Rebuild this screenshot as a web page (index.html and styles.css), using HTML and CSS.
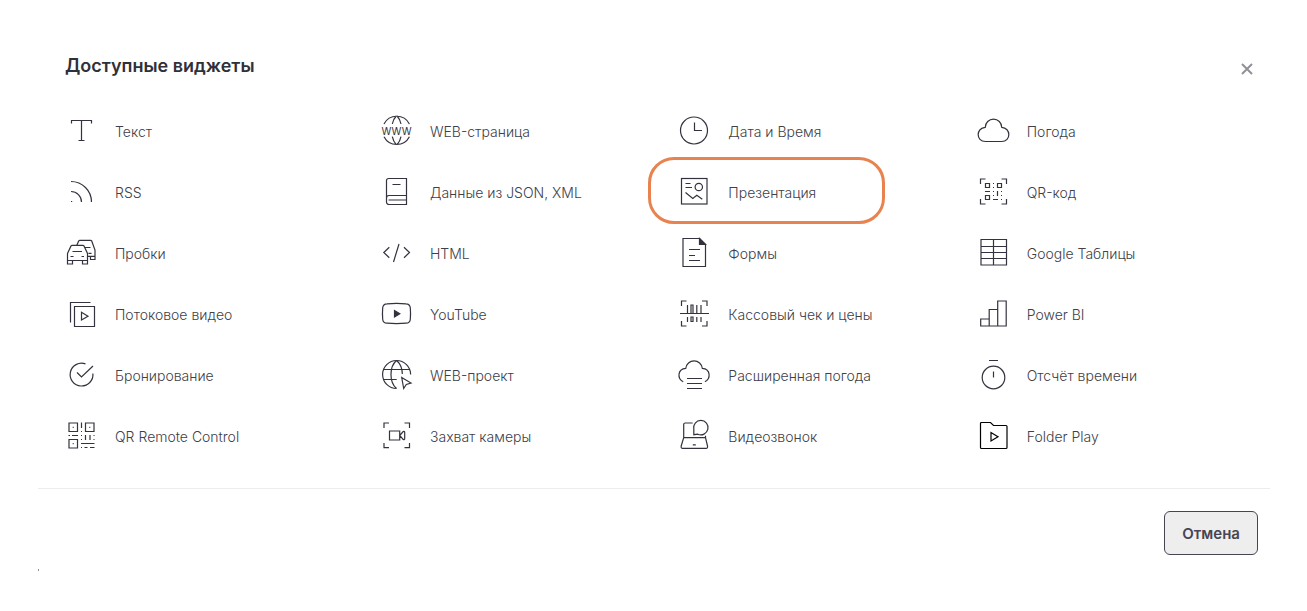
FILE: index.html
```
<!DOCTYPE html>
<html lang="ru">
<head>
<meta charset="UTF-8">
<meta name="viewport" content="width=device-width, initial-scale=1.0">
<title>Доступные виджеты</title>
<link rel="stylesheet" href="styles.css">
</head>
<body>
<div class="modal">
    <div class="modal-header">
        <h1>Доступные виджеты</h1>
        <button class="close" type="button" aria-label="Закрыть">
            <svg viewBox="0 0 12 12"><path d="M1 1l10 10M11 1L1 11"/></svg>
        </button>
    </div>

    <div class="widgets">
        <!-- Row 1 -->
        <button class="widget" type="button">
            <svg viewBox="0 0 32 32"><path d="M6.5 8.5v-3h20v3M16.5 5.5v20M13.5 25.5h6"/></svg>
            <span>Текст</span>
        </button>
        <button class="widget" type="button">
            <svg viewBox="0 0 32 32"><path d="M4 9a14.3 14.3 0 0 1 25.4 0M12.3 9q1-5 4-8M21 9q-1-5-4-8M4 21.7a14.3 14.3 0 0 0 25.4 0M12.3 21.7q1 5 4 8M21 21.7q-1 5-4 8"/><text x="16.500" y="19.500" text-anchor="middle">WWW</text></svg>
            <span>WEB-страница</span>
        </button>
        <button class="widget" type="button">
            <svg viewBox="0 0 32 32"><circle cx="16" cy="15.5" r="13.5"/><path d="M16.500 7.500v8h7.500"/></svg>
            <span>Дата и Время</span>
        </button>
        <button class="widget" type="button">
            <svg viewBox="0 0 32 32"><path d="M8.5 26.500c-10 0-9.500-13.700-.2-14.200a8.200 8.200 0 0 1 16.400 0c9.300.5 9.800 14.200-.2 14.200z"/></svg>
            <span>Погода</span>
        </button>

        <!-- Row 2 -->
        <button class="widget" type="button">
            <svg viewBox="0 0 32 32"><path d="M6 5.5a20.500 20.500 0 0 1 20.500 20.500M6 15.500a10.500 10.500 0 0 1 10.500 10.500M6 25.500h1.200"/></svg>
            <span>RSS</span>
        </button>
        <button class="widget" type="button">
            <svg viewBox="0 0 32 32"><path d="M26.500 19.500v-17h-18a2 2 0 0 0-2 2v21.500a2.500 2.500 0 0 0 2.500 2.500h17.500v-4.500h-18M26.500 24v-4.500h-17.500a2.500 2.500 0 0 0-2.500 2.500M12.500 8.500h8"/></svg>
            <span>Данные из JSON, XML</span>
        </button>
        <button class="widget selected" type="button">
            <svg viewBox="0 0 32 32"><rect x="3.5" y="2.5" width="25.5" height="25.5"/><circle cx="20.8" cy="11" r="3.7"/><path d="M7.500 7.500h5M7.500 11.500h6.500M7.500 16.500l7.300 6 4-3.200 5.500 4"/></svg>
            <span>Презентация</span>
        </button>
        <button class="widget" type="button">
            <svg viewBox="0 0 32 32"><path d="M3.500 8v-5h5M24.500 3h5v5M3.500 23v5h5M24.500 28h5v-5"/><path d="M8.500 7.500h4v4h-4zM20.500 7.500h4v4h-4zM8.500 19.500h4v4h-4zM8 15.500h5M16 7.500h1M16 11.500h1M16 15.500h1M16 19.500h1M20.500 15v5M24 15.500h1M24 19.500h1M16 23.500h5M24 23.500h1"/></svg>
            <span>QR-код</span>
        </button>

        <!-- Row 3 -->
        <button class="widget" type="button">
            <svg viewBox="0 0 32 32"><path d="M2.500 16.500l3.500-7.500 1-.7h11l1 .7 3.500 7.500v7h-20zM2.500 23.500v3.500h5v-3.500M17.500 23.500v3.500h5v-3.500M7.500 14.500h9.500M5.500 19.500h3M16.500 19.500h2.500M11.700 8.500l2-4.500 1-.7h11l1 .7 3.300 9v9.500h-4.500v-3.200M30 19.300h-7.500M20 10.500h5.500M23.500 16.300h3"/></svg>
            <span>Пробки</span>
        </button>
        <button class="widget" type="button">
            <svg viewBox="0 0 32 32"><path d="M9.300 10.300l-5.500 5.200 5.500 5.200M24 10.300l5.500 5.200-5.500 5.200M19 7l-5.500 18"/></svg>
            <span>HTML</span>
        </button>
        <button class="widget" type="button">
            <svg viewBox="0 0 32 32"><path d="M5 1.500h16.500l6 6v22h-22.500zM11 12.500h11M11 18.500h6M11 23.500h11"/><path class="solid" d="M21.500 1.500v6h6z"/></svg>
            <span>Формы</span>
        </button>
        <button class="widget" type="button">
            <svg viewBox="0 0 32 32"><path d="M4 2.500h25.500v25.500h-25.500zM4 9.500h25.500M4 15.500h25.500M4 21.500h25.500M16.500 2.500v25.500"/></svg>
            <span>Google Таблицы</span>
        </button>

        <!-- Row 4 -->
        <button class="widget" type="button">
            <svg viewBox="0 0 32 32"><path d="M25.500 4.500h-20v20M9.500 8.500h20v20h-20zM16.500 14.300v7.700l6.500-3.800z"/></svg>
            <span>Потоковое видео</span>
        </button>
        <button class="widget" type="button">
            <svg viewBox="0 0 32 32"><path d="M7 5.800q9.500-.7 19 0 4 .2 4.300 4 .5 5.700 0 11.400-.3 3.800-4.300 4-9.500.7-19 0-4-.2-4.300-4-.5-5.700 0-11.400.3-3.800 4.300-4z"/><path class="solid" d="M14.500 12.500v6.500l5.300-3.200z"/></svg>
            <span>YouTube</span>
        </button>
        <button class="widget" type="button">
            <svg viewBox="0 0 32 32"><path d="M3.500 8v-5h5M24 3h5v5M3.500 23v5h5M24 28h5v-5M2 15.500h29M9.500 7v8.500M13 15.500v-8.500h2v8.500M18.800 7v8.500M23 7v8.500M9.500 19v5M13 19h2v4.500h-2zM18.800 19v5M23 19v5"/></svg>
            <span>Кассовый чек и цены</span>
        </button>
        <button class="widget" type="button">
            <svg viewBox="0 0 32 32"><path d="M3.700 28v-7h8.500v7zM12.200 28v-16.500h8.500v16.500zM20.700 28v-25h8.500v25z"/></svg>
            <span>Power BI</span>
        </button>

        <!-- Row 5 -->
        <button class="widget" type="button">
            <svg viewBox="0 0 32 32"><path d="M20.500 4.900a11.400 11.400 0 1 0 7.400 9.600M12 13.500l4.500 4.500 11.500-11"/></svg>
            <span>Бронирование</span>
        </button>
        <button class="widget" type="button">
            <svg viewBox="0 0 32 32"><path d="M16.600 29.500a14 14 0 1 1 14-14M16.600 1.500c-7.500 6-7.500 22 0 28M16.600 1.500q5.700 5 5.700 13.500M4 10.500h25.500M4 20.500h12.700M21.700 18.500l9.300 5.500-4.700 1.500-2.600 4z"/></svg>
            <span>WEB-проект</span>
        </button>
        <button class="widget" type="button">
            <svg viewBox="0 0 32 32"><path d="M5.200 22.800c-6-3-6-12.800 2.600-13.500a8.300 8.300 0 0 1 16.500 0c8.600.7 8.600 10.500 2.600 13.500M9 19.500h15M9 24.500h15M9 29.500h15"/></svg>
            <span>Расширенная погода</span>
        </button>
        <button class="widget" type="button">
            <svg viewBox="0 0 32 32"><circle cx="16.5" cy="18.5" r="11.3"/><path d="M12 1.500h9M16.500 12.500v6"/></svg>
            <span>Отсчёт времени</span>
        </button>

        <!-- Row 6 -->
        <button class="widget" type="button">
            <svg viewBox="0 0 32 32"><path d="M4 3h8.500v8.500h-8.500zM20.500 3h8.500v8.500h-8.500zM4 19.500h8.500v8.500h-8.500zM7.700 7.300h1M24.300 7.300h1M7.700 23.700h1M16.500 2.500v5.500M16 11.500h1M3.500 15.500h1.500M7 15.500h6M16 15.500h1M16 19.500h1M20.500 15v5M25 15v5M28.500 15.500h1M28.500 19.500h1M16 23.500h13.500M16 27.500h1M19.500 27.500h3M25 27.500h4.500"/></svg>
            <span>QR Remote Control</span>
        </button>
        <button class="widget" type="button">
            <svg viewBox="0 0 32 32"><path d="M4 8v-5h5M24.500 3h5v5M4 23v4.700h5M24.500 27.700h5v-4.700M9.500 11h10.200v9h-10.200zM19.700 15.500l3.500-4q1.500-.7 1.500 1v6q0 1.700-1.500 1z"/></svg>
            <span>Захват камеры</span>
        </button>
        <button class="widget" type="button">
            <svg viewBox="0 0 32 32"><path d="M14.700 3h-7.500q-1.500 0-1.500 1.500v13.200l-2.500 8.300q-.5 2.300 1.500 2.300h23.300q2 0 1.500-2.300l-2-8.300v-2M5.700 17.700h21.800M14.800 24.800h3M15.800 14.700v-5.500a7.200 7.200 0 1 1 4 5z"/></svg>
            <span>Видеозвонок</span>
        </button>
        <button class="widget" type="button">
            <svg class="black" viewBox="0 0 32 32"><path d="M3.500 3.500q0-1 1-1h9l3 3h12.500q1 0 1 1v21q0 1-1 1h-24.500q-1 0-1-1zM14 12.500v8.500l7-4.300z"/></svg>
            <span>Folder Play</span>
        </button>
    </div>

    <div class="modal-footer">
        <button class="cancel" type="button">Отмена</button>
    </div>
    <div class="edge"></div>
</div>
</body>
</html>
```

FILE: styles.css
```
/* Page */
body {
    margin: 0;
    background-color: #fff;
    color: #404048;
    font-family: Inter, "Liberation Sans", sans-serif;
}
button {
    font-family: inherit;
    cursor: pointer;
}
/* Modal window */
.modal {
    padding: 48px 37px 0 38px;
}
.modal-header {
    display: flex;
    justify-content: space-between;
    align-items: center;
    height: 36px;
    padding: 0 13px 0 27px;
}
.modal-header h1 {
    margin: 0;
    color: #303038;
    font-size: 18px;
    line-height: 36px;
    font-weight: 600;
}
.close {
    display: flex;
    padding: 4px;
    margin-top: 6px;
    border: none;
    background: none;
}
.close svg {
    width: 12px;
    height: 12px;
    stroke: #909096;
    stroke-width: 2;
}
/* Widget list */
.widgets {
    display: grid;
    grid-template-columns: 19fr 18fr 18fr 16fr;
    padding: 16px 28px 22px 27px;
}
.widget {
    display: flex;
    align-items: center;
    justify-self: start;
    gap: 18px;
    padding: 15px 0 14px;
    border: none;
    background: none;
    color: #404048;
    font-size: 14px;
    line-height: 30px;
    font-weight: 300;
    white-space: nowrap;
}
.widget span {
    padding-top: 2px;
}
.widget svg {
    flex: none;
    width: 32px;
    height: 32px;
    overflow: visible;
    fill: none;
    stroke: #34323e;
    stroke-width: 1.2;
}
.widget svg text {
    fill: #34323e;
    stroke: none;
    font-size: 10px;
    font-weight: 400;
}
.widget .solid {
    fill: #34323e;
}
.widget .black {
    stroke: #000;
}
/* Orange frame around the chosen widget */
.selected {
    position: relative;
}
.selected::after {
    content: "";
    position: absolute;
    top: -4px;
    right: -69px;
    bottom: -2px;
    left: -30px;
    border: 3px solid #e8834f;
    border-radius: 26px;
}
/* Footer */
.modal-footer {
    display: flex;
    justify-content: flex-end;
    padding: 22px 12px 14px;
    border-top: 1px solid #ececec;
}
.cancel {
    padding: 2px 17px 0;
    border: 1px solid #484452;
    border-radius: 6px;
    background-color: #eee;
    color: #484452;
    font-size: 15px;
    line-height: 40px;
    font-weight: 600;
}
.edge {
    width: 1px;
    height: 2px;
    background-color: #909096;
}
```
